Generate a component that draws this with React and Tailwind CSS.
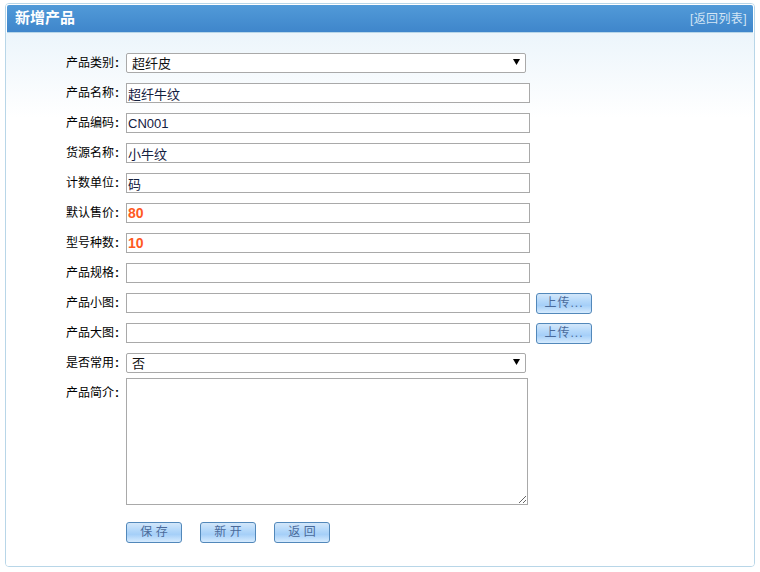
const F = '[font-family:"Liberation_Sans","Noto_Sans_CJK_SC",sans-serif]';

function Label({ children, className = "" }) {
  return (
    <label className={`w-[60px] text-[12px] leading-[20px] text-right whitespace-nowrap text-[#000] ${className}`}>
      {children}
      <span className="inline-block w-[6px] font-bold text-center">:</span>
    </label>
  );
}

function Btn({ children, className = "" }) {
  return (
    <button type="button" className={`w-[56px] h-[21px] rounded-[3px] border border-[#5288ba] bg-[linear-gradient(to_bottom,#d3e7fa_0%,#b6d9fa_35%,#a5cff8_60%,#d6ebfe_100%)] text-[12px] leading-[19px] text-[#4a6a9a] ${className}`}>
      {children}
    </button>
  );
}

function TextRow({ label, value = "", orange, children }) {
  return (
    <div className="flex items-center h-[20px] mb-[10px]">
      <Label>{label}</Label>
      <input
        readOnly
        value={value}
        className={`w-[404px] h-[20px] ml-[6px] px-[1px] border border-[#a9a9a9] bg-white outline-none ${orange ? "text-[14px] font-bold text-[#ff5a1f]" : "text-[13px] text-[#14203f]"}`}
      />
      {children}
    </div>
  );
}

function SelectRow({ label, value }) {
  return (
    <div className="flex items-center h-[20px] mb-[10px]">
      <Label>{label}</Label>
      <div className="relative ml-[6px] w-[400px] h-[20px]">
        <select className="block appearance-none w-full h-full pl-[5px] rounded-[2px] border border-[#a9a9a9] bg-white text-[13px] text-[#111] outline-none">
          <option>{value}</option>
        </select>
        <svg className="absolute right-[6px] top-[6px]" width="7" height="6" viewBox="0 0 7 6">
          <path d="M0 0H7L3.5 6Z" fill="#000" />
        </svg>
      </div>
    </div>
  );
}

export default function App() {
  return (
    <div className={`w-[760px] h-[572px] px-[5px] pt-[3px] bg-white ${F}`}>
      <div className="h-[564px] rounded-[4px] border border-[#b8d6e8] bg-white overflow-hidden flex flex-col">
        <div className="shrink-0 px-[1px] pt-[1px] bg-white">
          <div className="h-[28px] flex items-center justify-between pl-[8px] pr-[6px] rounded-t-[2px] bg-gradient-to-b from-[#519ad8] to-[#3f86cb] border-b border-[#b8d6e8]">
            <h1 className="text-[15px] font-bold text-white">新增产品</h1>
            <a className="text-[12px] tracking-[0.4px] text-[#d3e5f5]">[返回列表]</a>
          </div>
        </div>
        <div className="flex-1 pt-[20px] pl-[54px] bg-[linear-gradient(to_bottom,#ecf5fb_0px,#ffffff_85px)]">
          <SelectRow label="产品类别" value="超纤皮" />
          <TextRow label="产品名称" value="超纤牛纹" />
          <TextRow label="产品编码" value="CN001" />
          <TextRow label="货源名称" value="小牛纹" />
          <TextRow label="计数单位" value="码" />
          <TextRow label="默认售价" value="80" orange />
          <TextRow label="型号种数" value="10" orange />
          <TextRow label="产品规格" />
          <TextRow label="产品小图">
            <Btn className="ml-[6px] tracking-[1px]">上传...</Btn>
          </TextRow>
          <TextRow label="产品大图">
            <Btn className="ml-[6px] tracking-[1px]">上传...</Btn>
          </TextRow>
          <SelectRow label="是否常用" value="否" />
          <div className="flex items-start -mt-[5px]">
            <Label className="mt-[5px]">产品简介</Label>
            <textarea readOnly className="block w-[402px] h-[127px] ml-[6px] border border-[#a9a9a9] bg-white outline-none" />
          </div>
          <div className="flex gap-[18px] ml-[66px] mt-[17px]">
            <Btn>保 存</Btn>
            <Btn>新 开</Btn>
            <Btn>返 回</Btn>
          </div>
        </div>
      </div>
    </div>
  );
}
